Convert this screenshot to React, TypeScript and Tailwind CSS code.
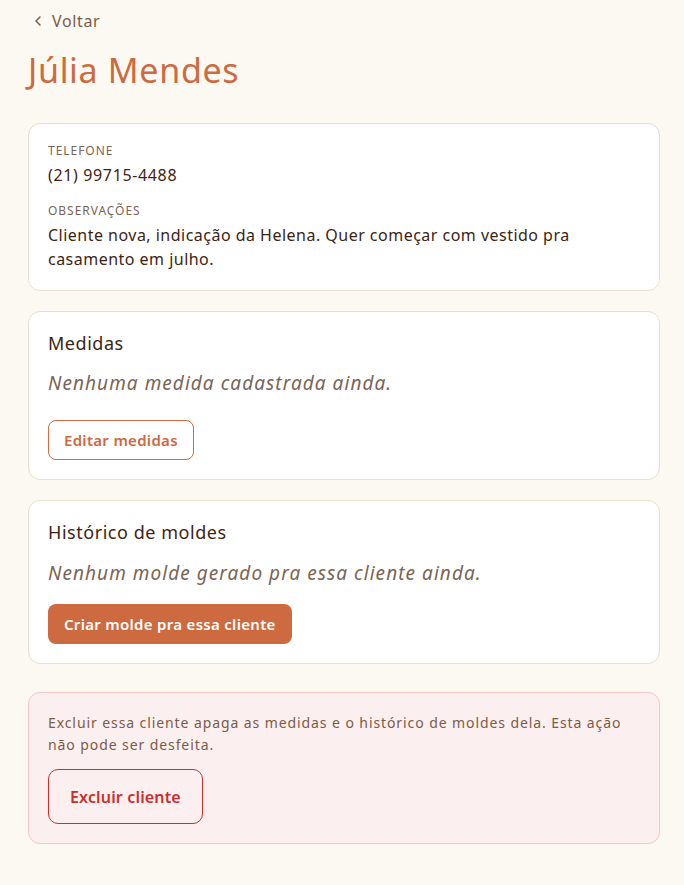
import { ChevronLeft } from 'lucide-react';

export default function App() {
  return (
    <div className="min-h-[885px] bg-[#fbf9f2] pl-[28px] pr-[24px] pt-[9px] pb-10 font-['Noto_Sans',sans-serif] text-[#3d2413]">
      {/* Back link */}
      <button className="flex items-center gap-[6px] text-[16px] leading-[24px] tracking-[0.04em] text-[#7a5c48]">
        <ChevronLeft className="w-[16px] h-[16px] ml-[2px]" strokeWidth={2.25} />
        Voltar
      </button>

      <h1 className="mt-[15px] text-[34px] leading-[44px] tracking-[0.02em] text-[#cd6a40]">Júlia Mendes</h1>

      {/* Info card */}
      <div className="mt-[31px] bg-white border border-[#e6e0cc] rounded-[12px] p-[19px]">
        <div className="text-[12px] leading-[16px] tracking-[0.08em] uppercase text-[#7a6555]">Telefone</div>
        <div className="mt-1 text-[16px] leading-[24px] tracking-[0.04em]">(21) 99715-4488</div>
        <div className="mt-4 text-[12px] leading-[16px] tracking-[0.08em] uppercase text-[#7a6555]">Observações</div>
        <div className="mt-1 text-[16px] leading-[24px] tracking-[0.03em]">
          Cliente nova, indicação da Helena. Quer começar com vestido pra casamento em julho.
        </div>
      </div>

      {/* Medidas */}
      <div className="mt-5 bg-white border border-[#e6e0cc] rounded-[12px] p-[19px]">
        <h2 className="text-[18px] leading-[24px] tracking-[0.03em]">Medidas</h2>
        <p className="mt-[14px] text-[19px] leading-[28px] italic tracking-[0.055em] text-[#7a6555]">Nenhuma medida cadastrada ainda.</p>
        <button className="mt-[23px] h-10 px-[15px] rounded-[8px] border border-[#d06b42] text-[15px] font-semibold tracking-[0.02em] text-[#cd6a40]">
          Editar medidas
        </button>
      </div>

      {/* Histórico */}
      <div className="mt-5 bg-white border border-[#e6e0cc] rounded-[12px] p-[19px]">
        <h2 className="text-[18px] leading-[24px] tracking-[0.03em]">Histórico de moldes</h2>
        <p className="mt-[15px] text-[19px] leading-[28px] italic tracking-[0.055em] text-[#7a6555]">Nenhum molde gerado pra essa cliente ainda.</p>
        <button className="mt-[17px] h-10 px-[16px] rounded-[8px] bg-[#cd6a40] text-[15px] font-semibold tracking-[0.02em] text-white">
          Criar molde pra essa cliente
        </button>
      </div>

      {/* Danger zone */}
      <div className="mt-[28px] bg-[#fcefef] border border-[#f5c8c5] rounded-[12px] p-[19px]">
        <p className="text-[14px] leading-[22px] tracking-[0.065em] text-[#7a5c48]">
          Excluir essa cliente apaga as medidas e o histórico de moldes dela. Esta ação não pode ser desfeita.
        </p>
        <button className="mt-[13px] h-[55px] px-[21px] rounded-[10px] border border-[#c9302c] text-[16px] font-semibold tracking-[0.01em] text-[#c9302c]">
          Excluir cliente
        </button>
      </div>
    </div>
  );
}
